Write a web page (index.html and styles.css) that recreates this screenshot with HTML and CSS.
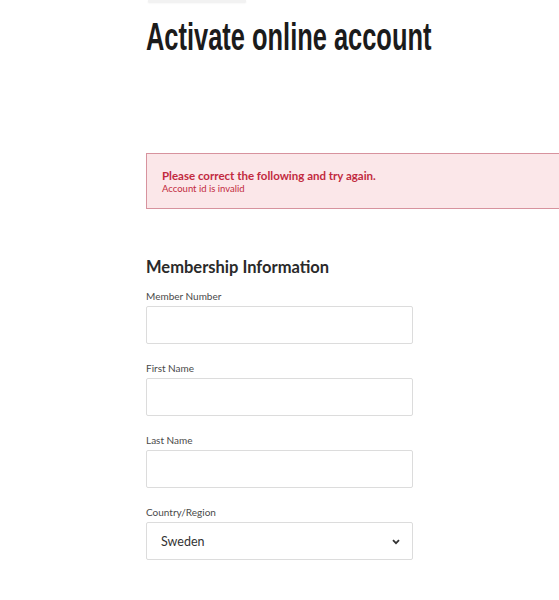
FILE: index.html
```html
<!DOCTYPE html>
<html lang="en">
<head>
  <meta charset="UTF-8">
  <meta name="viewport" content="width=device-width, initial-scale=1.0">
  <title>Activate online account</title>
  <link rel="stylesheet" href="styles.css">
</head>
<body>
  <div class="page">
    <div class="top-tab"></div>

    <h1 class="page-title">Activate online account</h1>

    <div class="alert">
      <p class="alert-title">Please correct the following and try again.</p>
      <p class="alert-text">Account id is invalid</p>
    </div>

    <form class="form">
      <h2 class="form-title">Membership Information</h2>

      <div class="field">
        <label class="field-label" for="member">Member Number</label>
        <input class="field-input" id="member" type="text">
      </div>

      <div class="field">
        <label class="field-label" for="first">First Name</label>
        <input class="field-input" id="first" type="text">
      </div>

      <div class="field">
        <label class="field-label" for="last">Last Name</label>
        <input class="field-input" id="last" type="text">
      </div>

      <div class="field">
        <label class="field-label" for="country">Country/Region</label>
        <div class="select">
          <span class="select-value">Sweden</span>
          <svg class="select-arrow" width="8" height="6" viewBox="0 0 8 6">
            <path d="M1 1.2 L4 4.2 L7 1.2" fill="none" stroke="#333" stroke-width="1.8"/>
          </svg>
        </div>
      </div>
    </form>
  </div>
</body>
</html>
```

FILE: styles.css
```css
:root {
  --text-color: #222;
  --label-color: #4a4a4a;
  --border-color: #dcdcdc;
  --alert-bg: #fbe7e9;
  --alert-border: #d7939e;
  --alert-text: #c22a40;
}

body {
  margin: 0;
  background-color: #fff;
  font-family: "Lato", sans-serif;
  color: var(--text-color);
}

.page {
  padding-left: 146px;
  overflow: hidden;
}

.top-tab {
  width: 98px;
  height: 2px;
  margin-left: 2px;
  background-color: #f2f2f2;
  box-shadow: 0 1px 2px rgba(0, 0, 0, 0.08);
}

/* condensed headline: no narrow face installed, so squeeze Liberation Sans */
.page-title {
  display: inline-block;
  margin: 15px 0 0 0;
  font-family: "Liberation Sans", Arial, sans-serif;
  font-size: 39px;
  font-weight: 700;
  line-height: 40px;
  color: #1b1b1b;
  white-space: nowrap;
  transform: scaleX(0.652);
  transform-origin: left center;
}

.alert {
  margin-top: 96px;
  width: 440px;
  height: 56px;
  box-sizing: border-box;
  padding: 15px 15px;
  background-color: var(--alert-bg);
  border: 1px solid var(--alert-border);
}

.alert p {
  margin: 0;
}

.alert-title {
  font-size: 11.5px;
  font-weight: 700;
  line-height: 14px;
  color: var(--alert-text);
}

.alert-text {
  font-size: 9.5px;
  line-height: 12px;
  color: var(--alert-text);
}

.form {
  margin-top: 47px;
  width: 267px;
}

.form-title {
  margin: 0 0 11px 0;
  font-size: 16.5px;
  font-weight: 700;
  line-height: 22px;
  color: #2a2a2a;
}

.field {
  margin-bottom: 17px;
}

.field-label {
  display: block;
  font-size: 10px;
  line-height: 14px;
  color: var(--label-color);
  margin-bottom: 3px;
}

.field-input,
.select {
  display: block;
  width: 100%;
  height: 38px;
  box-sizing: border-box;
  border: 1px solid var(--border-color);
  border-radius: 2px;
  background-color: #fff;
  font-family: "Lato", sans-serif;
}

.select {
  display: flex;
  justify-content: space-between;
  align-items: center;
  padding: 0 12px 0 14px;
}

.select-value {
  font-size: 12.5px;
  color: #333;
}

.select-arrow {
  margin-top: 2px;
}
```
